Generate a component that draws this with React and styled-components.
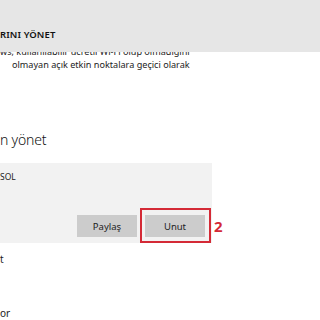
import React from 'react'
import styled, { createGlobalStyle } from 'styled-components'

const GlobalStyle = createGlobalStyle`
  html, body {
    margin: 0;
    padding: 0;
    background: #ffffff;
  }
  body {
    font-family: "Noto Sans", "Open Sans", sans-serif;
    color: #1a1a1a;
  }
`

const Page = styled.div`
  width: 320px;
  height: 320px;
  overflow: hidden;
  background: #ffffff;
`

const Header = styled.div`
  position: relative;
  z-index: 1;
  height: 52px;
  box-sizing: border-box;
  background: #e6e6e6;
  display: flex;
  align-items: flex-end;
  padding-bottom: 11px;
`

const HeaderTitle = styled.span`
  font-size: 9.5px;
  font-weight: 600;
  letter-spacing: 0.1px;
  color: #111;
`

const Intro = styled.p`
  margin: -7px 0 0;
  font-size: 9.1px;
  line-height: 13px;
  color: #222;
`

const IntroLine = styled.span`
  display: block;
  white-space: nowrap;
  padding-left: ${p => p.$indent || 0}px;
`

const Section = styled.h2`
  margin: 59px 0 0;
  font-size: 14px;
  font-weight: 300;
  letter-spacing: -0.2px;
  line-height: 20px;
  color: #111;
`

const Card = styled.div`
  margin-top: 13px;
  width: 212px;
  height: 80px;
  box-sizing: border-box;
  background: #f2f2f2;
  display: flex;
  flex-direction: column;
  justify-content: space-between;
  padding: 8px 7px 6px 0;
`

const NetworkName = styled.span`
  font-size: 8.5px;
  color: #222;
`

const Actions = styled.div`
  display: flex;
  justify-content: flex-end;
  align-items: center;
  gap: 8px;
`

const Button = styled.button`
  width: 60px;
  height: 22px;
  border: none;
  background: #cccccc;
  font-family: inherit;
  font-size: 9.5px;
  color: #222;
  padding: 0;
`

const Highlight = styled.span`
  position: relative;
  display: inline-flex;
  border: 2px solid #d42a36;
  padding: 5px 4px 4px 3px;
  margin: -7px -6px -6px -5px;
`

const Step = styled.span`
  position: absolute;
  left: 100%;
  top: 50%;
  transform: translate(5px, -45%);
  font-size: 15px;
  font-weight: 700;
  color: #d42a36;
  line-height: 1;
`

const List = styled.div`
  display: flex;
  flex-direction: column;
  gap: 41px;
  margin-top: 10px;
`

const ListItem = styled.span`
  font-size: 10px;
  line-height: 13px;
  color: #222;
`

export default function App() {
  return (
    <Page>
      <GlobalStyle />
      <Header>
        <HeaderTitle>RINI YÖNET</HeaderTitle>
      </Header>
      <Intro>
        <IntroLine>ws, kullanılabilir ücretli Wi-Fi olup olmadığını</IntroLine>
        <IntroLine $indent={12}>olmayan açık etkin noktalara geçici olarak</IntroLine>
      </Intro>
      <Section>n yönet</Section>
      <Card>
        <NetworkName>SOL</NetworkName>
        <Actions>
          <Button>Paylaş</Button>
          <Highlight>
            <Button>Unut</Button>
            <Step>2</Step>
          </Highlight>
        </Actions>
      </Card>
      <List>
        <ListItem>t</ListItem>
        <ListItem>or</ListItem>
      </List>
    </Page>
  )
}
